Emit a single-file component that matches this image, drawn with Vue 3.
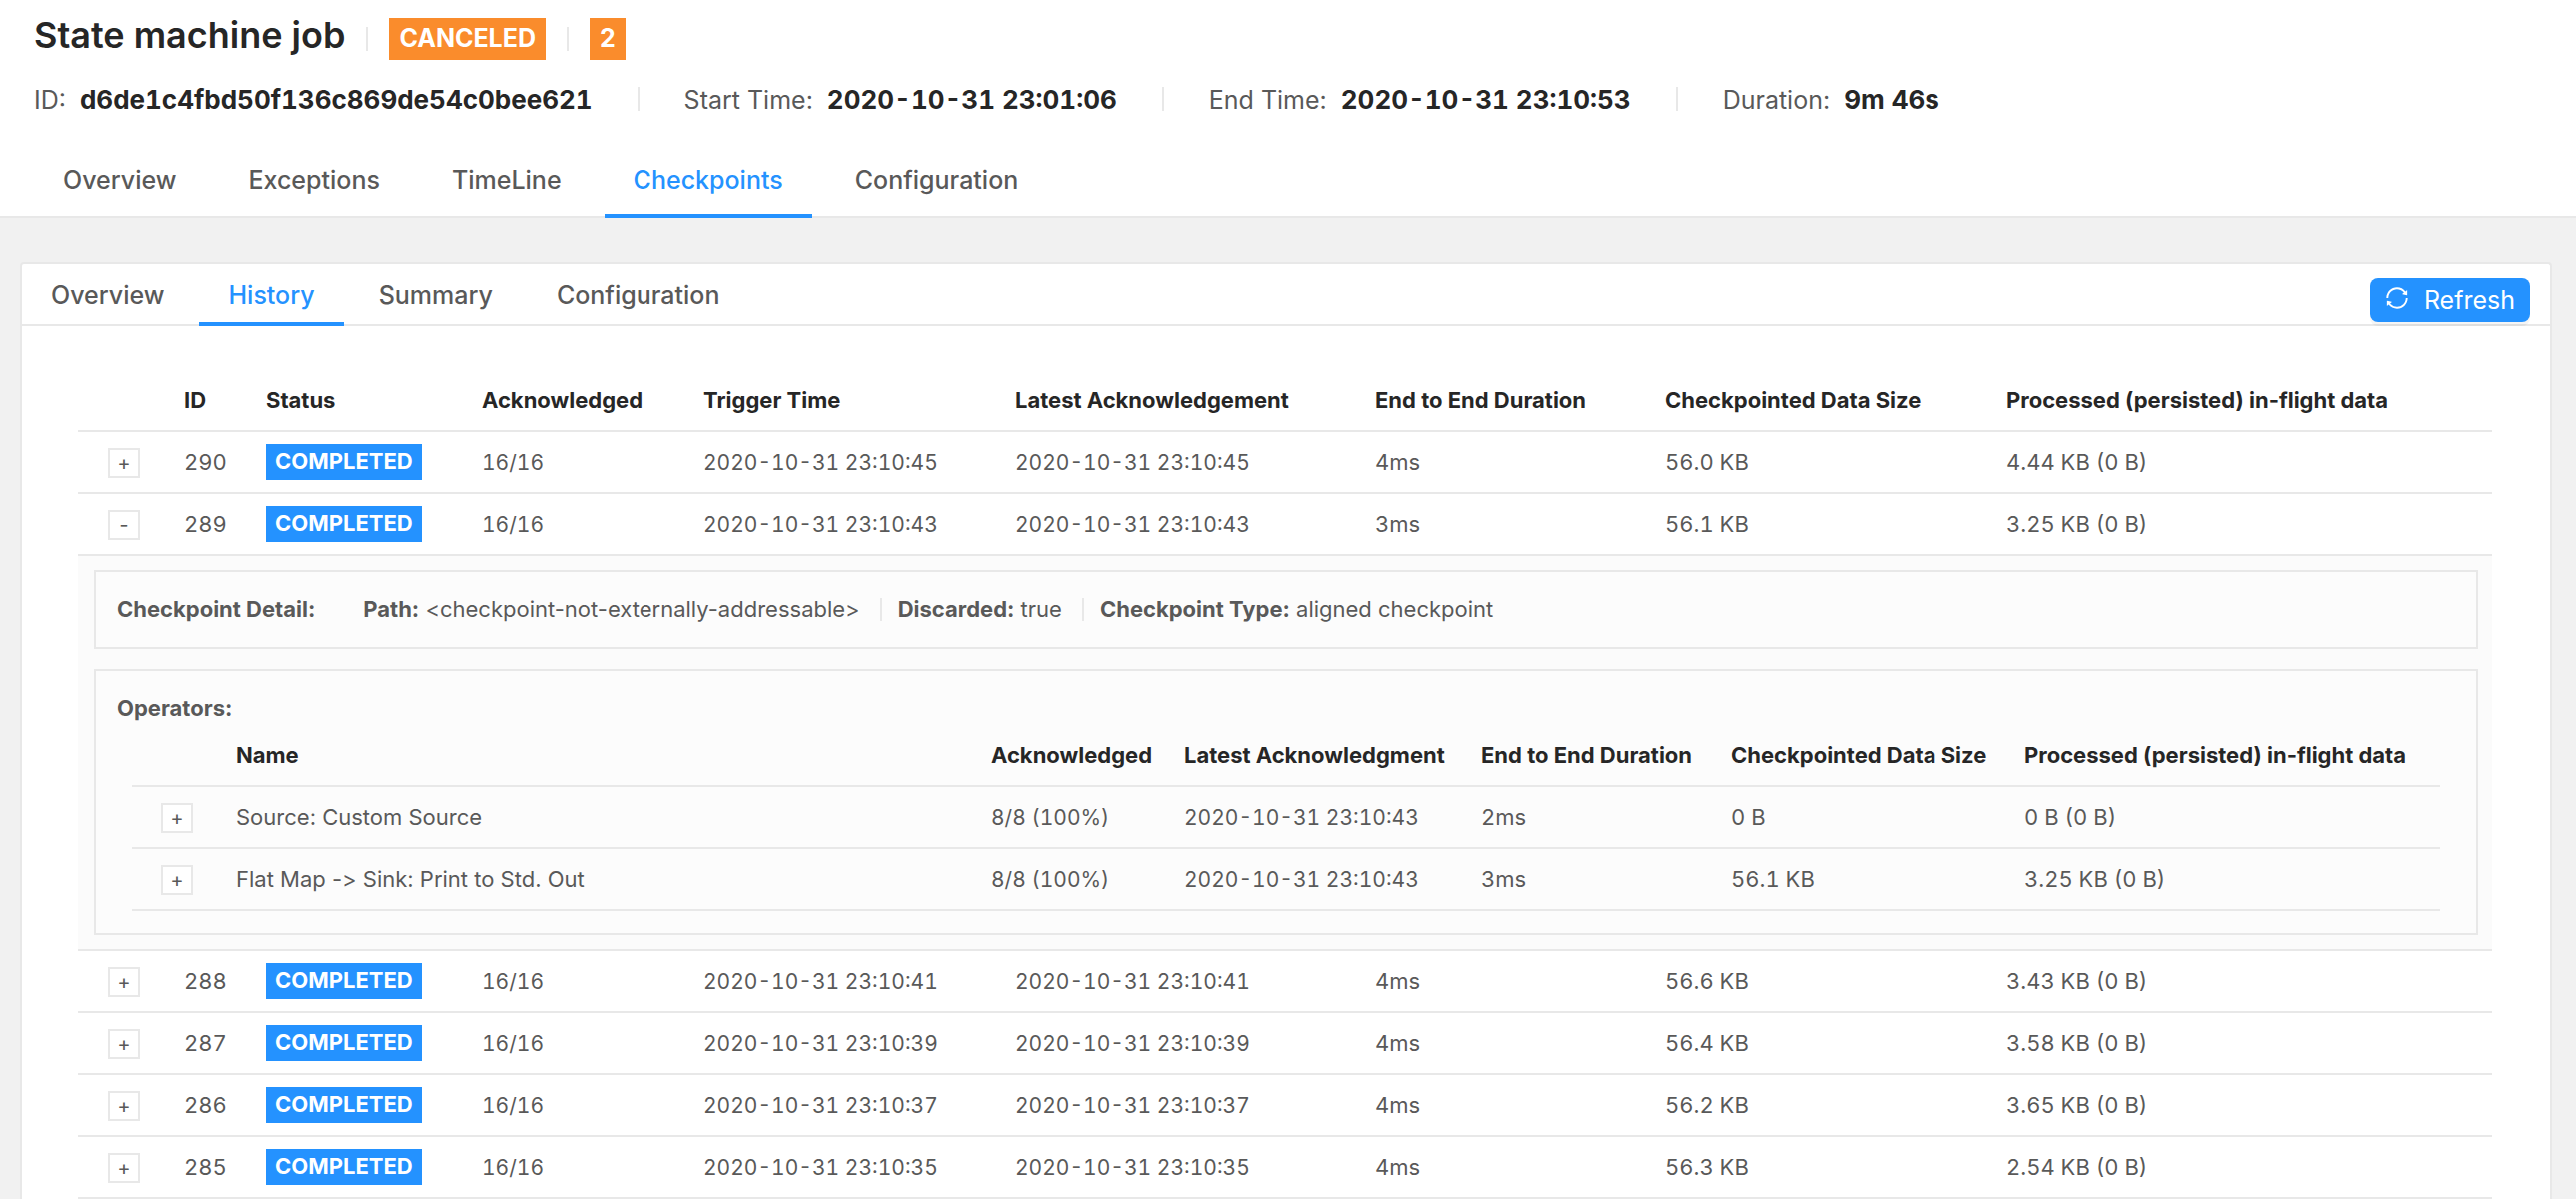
<script setup>
import { ref } from 'vue'

const facts = [
  { label: 'ID:', value: 'd6de1c4fbd50f136c869de54c0bee621' },
  { label: 'Start Time:', value: '2020-10-31 23:01:06' },
  { label: 'End Time:', value: '2020-10-31 23:10:53' },
  { label: 'Duration:', value: '9m 46s' },
]

const jobTabs = ['Overview', 'Exceptions', 'TimeLine', 'Checkpoints', 'Configuration']
const checkpointTabs = ['Overview', 'History', 'Summary', 'Configuration']

const columns = [
  'ID', 'Status', 'Acknowledged', 'Trigger Time', 'Latest Acknowledgement',
  'End to End Duration', 'Checkpointed Data Size', 'Processed (persisted) in-flight data',
]

const day = '2020-10-31 '
const checkpoints = [
  { id: 290, time: day + '23:10:45', duration: '4ms', size: '56.0 KB', processed: '4.44 KB (0 B)' },
  { id: 289, time: day + '23:10:43', duration: '3ms', size: '56.1 KB', processed: '3.25 KB (0 B)' },
  { id: 288, time: day + '23:10:41', duration: '4ms', size: '56.6 KB', processed: '3.43 KB (0 B)' },
  { id: 287, time: day + '23:10:39', duration: '4ms', size: '56.4 KB', processed: '3.58 KB (0 B)' },
  { id: 286, time: day + '23:10:37', duration: '4ms', size: '56.2 KB', processed: '3.65 KB (0 B)' },
  { id: 285, time: day + '23:10:35', duration: '4ms', size: '56.3 KB', processed: '2.54 KB (0 B)' },
]

const operatorColumns = [
  'Name', 'Acknowledged', 'Latest Acknowledgment', 'End to End Duration',
  'Checkpointed Data Size', 'Processed (persisted) in-flight data',
]
const operators = [
  { name: 'Source: Custom Source', acknowledged: '8/8 (100%)', time: day + '23:10:43', duration: '2ms', size: '0 B', processed: '0 B (0 B)' },
  { name: 'Flat Map -> Sink: Print to Std. Out', acknowledged: '8/8 (100%)', time: day + '23:10:43', duration: '3ms', size: '56.1 KB', processed: '3.25 KB (0 B)' },
]

const expandedId = ref(289)
const toggle = (id) => {
  expandedId.value = expandedId.value === id ? null : id
}
</script>

<template>
  <div class="page">
    <header class="job">
      <div class="title-row">
        <h1>State machine job</h1>
        <i class="divider"></i>
        <span class="badge badge-large">CANCELED</span>
        <i class="divider"></i>
        <span class="badge badge-large">2</span>
      </div>
      <div class="facts">
        <template v-for="(fact, i) in facts" :key="fact.label">
          <i v-if="i" class="divider"></i>
          <span class="fact">{{ fact.label }}<strong>{{ fact.value }}</strong></span>
        </template>
      </div>
      <nav class="tabs job-tabs">
        <a v-for="tab in jobTabs" :key="tab" href="#" :class="{ active: tab === 'Checkpoints' }">{{ tab }}</a>
      </nav>
    </header>

    <main class="card">
      <div class="card-head">
        <nav class="tabs card-tabs">
          <a v-for="tab in checkpointTabs" :key="tab" href="#" :class="{ active: tab === 'History' }">{{ tab }}</a>
        </nav>
        <button class="refresh" type="button">
          <svg viewBox="0 0 1024 1024" fill="currentColor" aria-hidden="true">
            <path d="M168 504.200c1-43.700 10-86.100 26.900-126 17.300-41 42.100-77.700 73.700-109.400S337 212.300 378 195c42.400-17.900 87.400-27 133.900-27s91.500 9.100 133.800 27A341.500 341.500 0 0 1 755 268.800c9.900 9.900 19.200 20.400 27.800 31.400l-60.200 47a8 8 0 0 0 3 14.100l175.700 43c5 1.200 9.900-2.600 9.900-7.700l.8-180.900c0-6.700-7.700-10.500-12.900-6.300l-56.400 44.100C765.800 155.100 646.200 92 511.800 92 282.700 92 96.300 275.600 92 503.800a8 8 0 0 0 8 8.200h60c4.400 0 7.900-3.500 8-7.800zm756 7.800h-60c-4.400 0-7.900 3.500-8 7.800-1 43.700-10 86.100-26.900 126-17.300 41-42.100 77.800-73.700 109.400A342.450 342.450 0 0 1 512.100 856a342.240 342.240 0 0 1-243.200-100.800c-9.900-9.900-19.200-20.400-27.800-31.400l60.200-47a8 8 0 0 0-3-14.100l-175.700-43c-5-1.200-9.900 2.600-9.900 7.700l-.7 181c0 6.700 7.700 10.500 12.900 6.300l56.400-44.100C258.200 868.900 377.800 932 512.200 932c229.200 0 415.500-183.700 419.800-411.800a8 8 0 0 0-8-8.200z" />
          </svg>
          Refresh
        </button>
      </div>

      <table class="history">
        <colgroup>
          <col class="h-toggle"><col class="h-id"><col class="h-status"><col class="h-ack"><col class="h-trigger">
          <col class="h-latest"><col class="h-duration"><col class="h-size"><col>
        </colgroup>
        <thead>
          <tr>
            <th></th>
            <th v-for="column in columns" :key="column">{{ column }}</th>
          </tr>
        </thead>
        <tbody>
          <template v-for="row in checkpoints" :key="row.id">
            <tr>
              <td class="toggle-cell">
                <button class="toggle" type="button" @click="toggle(row.id)">{{ expandedId === row.id ? '-' : '+' }}</button>
              </td>
              <td>{{ row.id }}</td>
              <td><span class="badge badge-blue">COMPLETED</span></td>
              <td class="compact">16/16</td>
              <td class="compact">{{ row.time }}</td>
              <td class="compact">{{ row.time }}</td>
              <td>{{ row.duration }}</td>
              <td>{{ row.size }}</td>
              <td>{{ row.processed }}</td>
            </tr>
            <tr v-if="expandedId === row.id">
              <td class="expanded" colspan="9">
                <section class="box detail">
                  <strong class="detail-title">Checkpoint Detail:</strong>
                  <span><strong>Path:</strong> &lt;checkpoint-not-externally-addressable&gt;</span>
                  <i class="divider"></i>
                  <span><strong>Discarded:</strong> true</span>
                  <i class="divider"></i>
                  <span><strong>Checkpoint Type:</strong> aligned checkpoint</span>
                </section>
                <section class="box operators">
                  <strong class="operators-title">Operators:</strong>
                  <table>
                    <colgroup>
                      <col class="o-toggle"><col><col class="o-ack"><col class="o-latest">
                      <col class="o-duration"><col class="o-size"><col class="o-processed">
                    </colgroup>
                    <thead>
                      <tr>
                        <th></th>
                        <th v-for="column in operatorColumns" :key="column">{{ column }}</th>
                      </tr>
                    </thead>
                    <tbody>
                      <tr v-for="operator in operators" :key="operator.name">
                        <td class="toggle-cell"><button class="toggle" type="button">+</button></td>
                        <td class="operator-name">{{ operator.name }}</td>
                        <td class="compact">{{ operator.acknowledged }}</td>
                        <td class="compact">{{ operator.time }}</td>
                        <td>{{ operator.duration }}</td>
                        <td>{{ operator.size }}</td>
                        <td>{{ operator.processed }}</td>
                      </tr>
                    </tbody>
                  </table>
                </section>
              </td>
            </tr>
          </template>
        </tbody>
      </table>
    </main>
  </div>
</template>

<style>
body {
  margin: 0;
  background: #f1f1f1;
}
</style>

<style scoped>
* {
  box-sizing: border-box;
}

.page {
  display: flex;
  flex-direction: column;
  min-height: 100vh;
  color: #595959;
  background: #f1f1f1;
  font-family: Inter, "Liberation Sans", sans-serif;
  font-size: 22px;
}

button {
  font: inherit;
  cursor: pointer;
}

strong {
  font-weight: 700;
}

.divider {
  width: 2px;
  height: 24px;
  background: #e8e8e8;
}

.job {
  background: #fff;
  border-bottom: 2px solid #e8e8e8;
}

.title-row {
  display: flex;
  align-items: center;
  gap: 21px;
  padding: 0 34px;
  height: 78px;
}

h1 {
  margin: 0;
  color: #262626;
  font-size: 36px;
  font-weight: 600;
  line-height: 70px;
  padding-bottom: 8px;
}

.facts {
  display: flex;
  align-items: center;
  gap: 45px;
  padding: 0 34px;
  height: 42px;
  font-size: 25px;
}

.fact {
  display: flex;
  align-items: baseline;
  gap: 14px;
}

.fact strong {
  color: #262626;
  font-size: 26px;
  font-variant-numeric: tabular-nums;
}

.badge {
  display: inline-block;
  color: #fff;
  background: #fa8c2c;
  font-weight: 700;
}

.badge-large {
  height: 42px;
  padding: 0 10px;
  font-size: 25px;
  line-height: 40px;
}

.badge-blue {
  height: 36px;
  padding: 0 9px;
  line-height: 34px;
  background: #2492ff;
  vertical-align: middle;
}

.tabs {
  display: flex;
  font-size: 25px;
  font-weight: 500;
}

.tabs a {
  padding: 4px 29px 0;
  color: #595959;
  text-decoration: none;
  border-bottom: 4px solid transparent;
  margin-bottom: -2px;
}

.tabs a.active {
  color: #2492ff;
  border-bottom-color: #2492ff;
}

.job-tabs {
  gap: 14px;
  padding: 22px 34px 0;
}

.job-tabs a {
  line-height: 68px;
}

.card {
  flex: 1;
  margin: 44px 24px 0 20px;
  background: #fff;
  border: 2px solid #e8e8e8;
  border-bottom: 0;
  border-radius: 4px 4px 0 0;
}

.card-head {
  display: flex;
  justify-content: space-between;
  align-items: flex-start;
  padding-right: 20px;
  border-bottom: 2px solid #e8e8e8;
}

.card-tabs {
  gap: 6px;
}

.card-tabs a {
  line-height: 54px;
}

.refresh {
  display: flex;
  align-items: center;
  gap: 14px;
  height: 44px;
  margin-top: 14px;
  margin-bottom: -2px;
  padding: 0 15px 0 14px;
  color: #fff;
  background: #2492ff;
  border: 0;
  border-radius: 8px;
  box-shadow: 0 4px 0 rgba(0, 0, 0, 0.04);
  font-size: 25px;
  line-height: 42px;
}

.refresh svg {
  width: 26px;
  height: 26px;
  margin-bottom: 4px;
}

table {
  table-layout: fixed;
  border-collapse: separate;
  border-spacing: 0;
}

th,
td {
  height: 62px;
  padding: 0 16px;
  text-align: left;
  white-space: nowrap;
  border-bottom: 2px solid #e8e8e8;
}

th {
  color: #262626;
  font-weight: 700;
}

td {
  font-variant-numeric: tabular-nums;
}

.history {
  width: calc(100% - 114px);
  margin: 44px 58px 0 56px;
}

.h-toggle { width: 90px; }
.h-id { width: 82px; }
.h-status { width: 216px; }
.h-ack { width: 222px; }
.h-trigger { width: 312px; }
.h-latest { width: 360px; }
.h-duration { width: 290px; }
.h-size { width: 342px; }

.compact {
  font-size: 21px;
}

.toggle-cell {
  padding: 2px 0 0 2px;
  text-align: center;
}

.toggle {
  width: 32px;
  height: 30px;
  padding: 0;
  color: #595959;
  background: #fff;
  border: 2px solid #e8e8e8;
  font-size: 20px;
  line-height: 26px;
  vertical-align: middle;
}

.expanded {
  padding: 14px 14px 14px 16px;
  background: #fbfbfb;
  font-variant-numeric: normal;
}

.box {
  background: #fcfcfc;
  border: 2px solid #e8e8e8;
}

.detail {
  display: flex;
  align-items: center;
  gap: 16px;
  height: 80px;
  padding: 0 21px;
}

.detail .divider {
  margin-left: 4px;
}

.detail-title {
  margin-right: 32px;
}

.operators {
  margin-top: 20px;
  padding: 20px 36px 22px;
}

.operators-title {
  display: block;
  margin-left: -15px;
  line-height: 34px;
}

.operators table {
  width: 100%;
}

/* keeps "->" as two characters in operator names */
.operator-name {
  font-variant-ligatures: no-contextual;
  font-variant-numeric: normal;
}

.o-toggle { width: 88px; }
.o-ack { width: 193px; }
.o-latest { width: 297px; }
.o-duration { width: 250px; }
.o-size { width: 294px; }
.o-processed { width: 432px; }
</style>
